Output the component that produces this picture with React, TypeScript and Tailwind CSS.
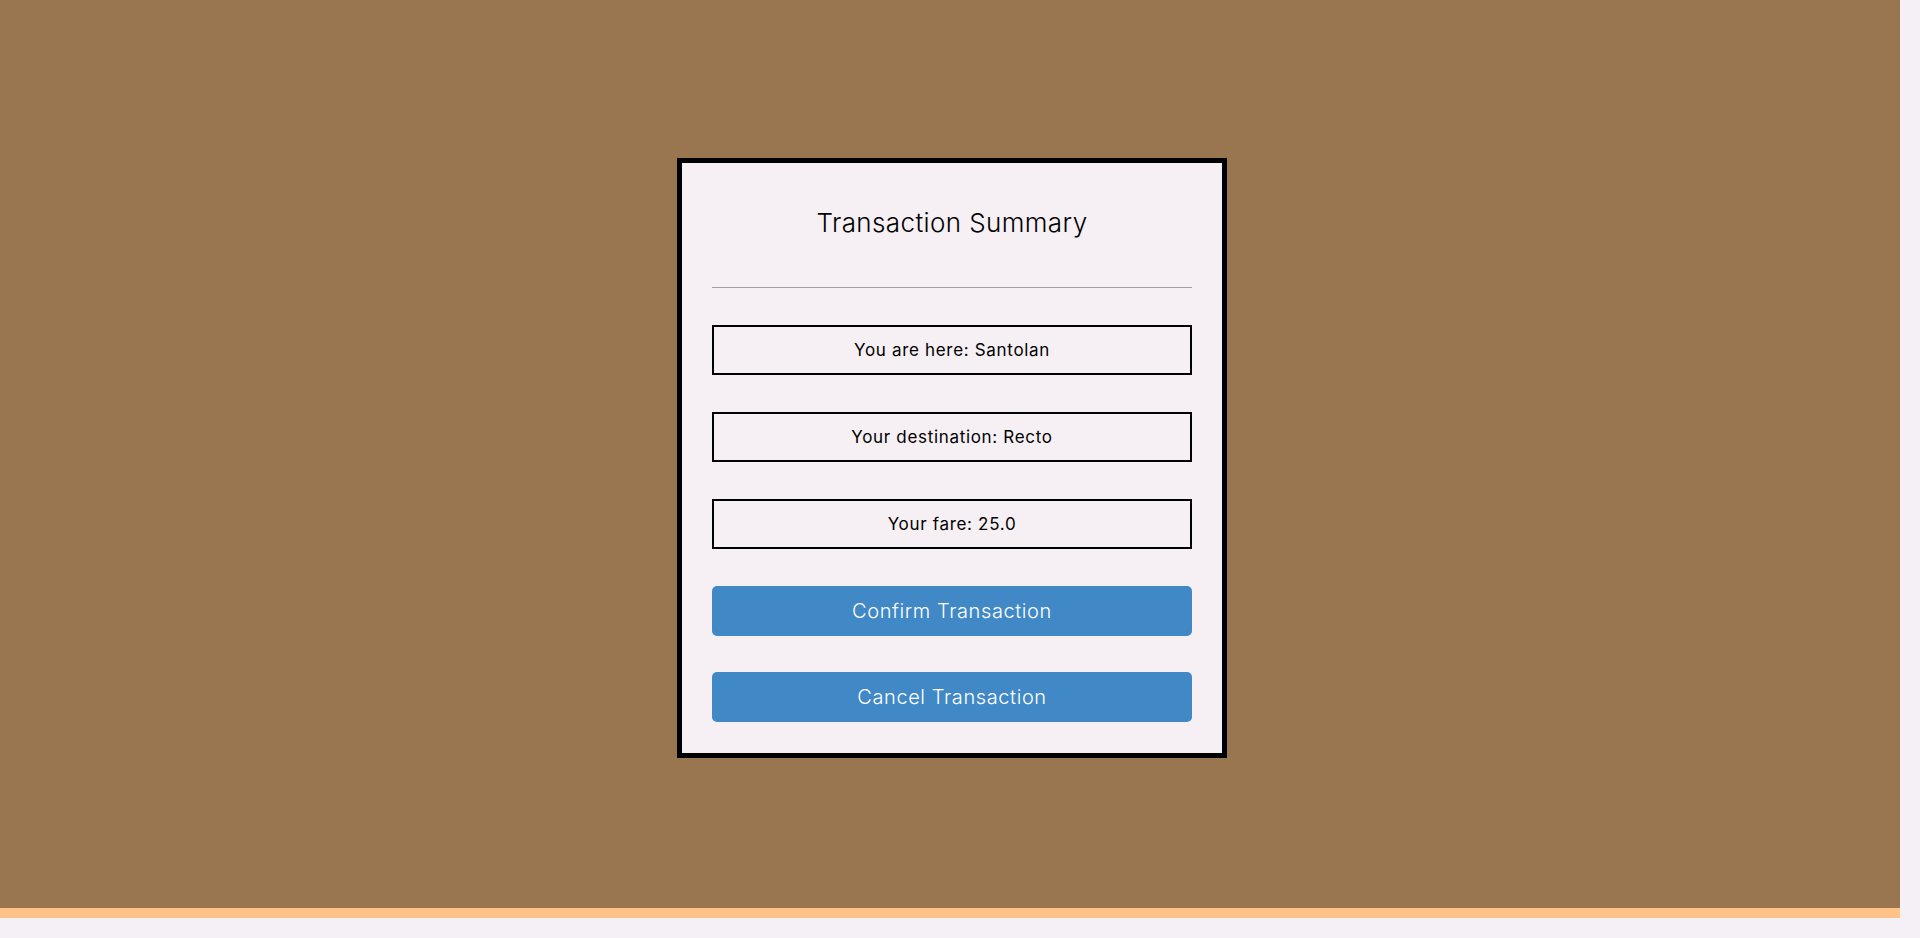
export default function App() {
  const rows = ["You are here: Santolan", "Your destination: Recto", "Your fare: 25.0"];
  const actions = ["Confirm Transaction", "Cancel Transaction"];

  return (
    <div className="min-h-[938px] bg-[#f5f0f5] font-['Inter',sans-serif]">
      {/* stage */}
      <div className="w-[1900px] h-[918px] bg-[#9a7650] border-b-[10px] border-[#ffc387] flex justify-center pl-[4px] pt-[158px]">
        <div className="w-[550px] h-[600px] border-[5px] border-black bg-[#f6f0f5] px-[30px] pt-[42px] pb-[30px] flex flex-col">
          <h2 className="text-[26px] leading-[36px] font-light tracking-[0.015em] text-black text-center">
            Transaction Summary
          </h2>
          <hr className="mt-[46px] border-0 h-px bg-[#a0a0a0]" />

          <div className="mt-[37px] flex flex-col gap-[37px]">
            {rows.map((r) => (
              <div
                key={r}
                className="h-[50px] border-2 border-black flex items-center justify-center pt-[2px] text-[17px] tracking-[0.04em] text-black"
              >
                {r}
              </div>
            ))}
          </div>
          <div className="mt-[37px] flex flex-col gap-[36px]">
            {actions.map((a) => (
              <button
                key={a}
                className="h-[50px] rounded-[5px] bg-[#4088c6] text-white text-[20px] font-light tracking-[0.03em] flex items-center justify-center"
              >
                {a}
              </button>
            ))}
          </div>
        </div>
      </div>
    </div>
  );
}
